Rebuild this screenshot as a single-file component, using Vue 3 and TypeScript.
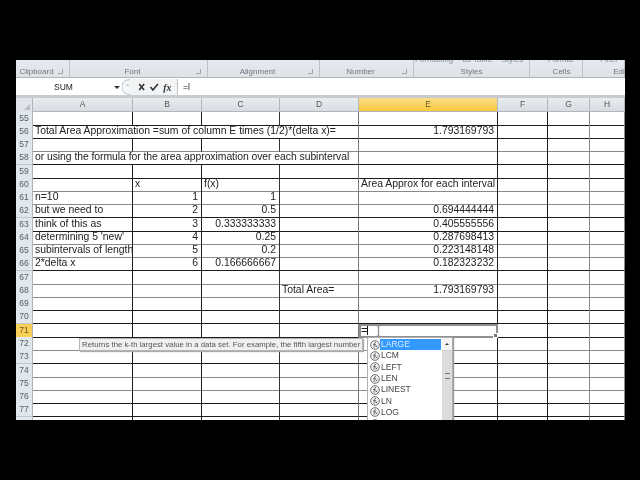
<template>
  <div class="page">
    <div class="sheet">
      <div class="ribbon">
        <div v-for="g in groups" :key="g.label" class="group" :class="g.kind" :style="{ width: g.w + 'px' }">
          <span v-if="g.top" class="group-top">{{ g.top }}</span>
          <span class="group-label">{{ g.label }}</span>
          <span v-if="g.kind === 'launch'" class="launcher"></span>
        </div>
      </div>

      <div class="formula-bar">
        <div class="name-box">
          <span class="name">SUM</span>
          <span class="name-arrow"></span>
        </div>
        <div class="fx-box">
          <svg width="56" height="16" viewBox="0 0 56 16">
            <path d="M8 .5C2 .5 0 4 0 8s2 7.500 8 7.500" fill="#f6f7f8" stroke="#b5bcc4" />
            <path d="M4 6h3" stroke="#c0c4c8" stroke-width="1.500" />
            <path d="M17.500 5l5 6M22.500 5l-5 6" stroke="#333" stroke-width="1.600" />
            <path d="M29 8l2.500 3 5-6" fill="none" stroke="#333" stroke-width="1.600" />
            <text x="42" y="12" class="fx">fx</text>
          </svg>
        </div>
        <div class="formula">=l</div>
      </div>

      <div class="row head">
        <div class="corner"><span class="corner-mark"></span></div>
        <div v-for="c in columns" :key="c" class="col-head" :class="{ active: c === 'E' }">{{ c }}</div>
      </div>

      <div v-for="r in rows" :key="r.n" class="row" :class="{ soft: softRows.includes(r.n) }">
        <div class="row-head" :class="{ active: r.n === 71 }">{{ r.n }}</div>
        <div
          v-for="c in r.cells"
          :key="c.col"
          class="cell"
          :class="[c.col.toLowerCase(), { num: c.num, editing: r.n === 71 && c.col === 'E', tight: r.n === 58 }]"
          :style="{ gridColumn: 'span ' + c.span }"
        >
          {{ c.text }}<span v-if="r.n === 71 && c.col === 'E'" class="caret"></span>
          <span v-if="r.n === 71 && c.col === 'E'" class="handle"></span>
        </div>
      </div>

      <svg class="ibeam" width="7" height="12" viewBox="0 0 7 12">
        <path d="M1 .5h5M1 11.500h5M3.500 .5v11" stroke="#8a8f94" stroke-width="1.300" fill="none" />
      </svg>

      <div class="tip">Returns the k-th largest value in a data set. For example, the fifth largest number</div>

      <div class="picker">
        <div class="picker-list">
          <div v-for="(f, i) in functions" :key="f" class="pick" :class="{ on: i === 0 }">
            <svg class="pick-icon" width="10" height="10" viewBox="0 0 11 11">
              <circle cx="5.500" cy="5.500" r="4.800" fill="#f1f1f1" stroke="#666" />
              <path d="M6.500 2.500C5 2.500 5 3.500 4.800 5L4.300 8.500M3.500 4.800h3M6 6l2 2M8 6L6 8" fill="none" stroke="#444" stroke-width=".8" />
            </svg>
            <span class="pick-name">{{ f }}</span>
          </div>
        </div>
        <div class="scroll">
          <span class="scroll-btn"><span class="up"></span></span>
          <span class="scroll-thumb"><span class="grip"></span></span>
        </div>
      </div>
    </div>
  </div>
</template>

<script setup lang="ts">
interface Cell {
  col: string
  span: number
  text: string
  num: boolean
}

const columns = ['A', 'B', 'C', 'D', 'E', 'F', 'G', 'H']

const groups = [
  { label: 'Clipboard', w: 54, kind: 'launch', top: '' },
  { label: 'Font', w: 138, kind: 'launch', top: '' },
  { label: 'Alignment', w: 112, kind: 'launch', top: '' },
  { label: 'Number', w: 94, kind: 'launch', top: '' },
  { label: 'Styles', w: 116, kind: '', top: 'Formatting ·  as Table ·  Styles ·' },
  { label: 'Cells', w: 53, kind: 'shift', top: '    Format' },
  { label: 'Editing', w: 42, kind: 'tail', top: '     Filter' },
]

const functions = ['LARGE', 'LCM', 'LEFT', 'LEN', 'LINEST', 'LN', 'LOG', 'LOG10']

const softRows = [57, 60, 61, 64, 65, 67, 68, 72, 74, 75]

const data: Record<number, Partial<Record<string, string>>> = {
  56: { A: 'Total Area Approximation =sum of column E times (1/2)*(delta x)=', E: '1.793169793' },
  58: { A: 'or using the formula for the area approximation over each subinterval' },
  60: { B: 'x', C: 'f(x)', E: 'Area Approx for each interval' },
  61: { A: 'n=10', B: '1', C: '1' },
  62: { A: 'but we need to', B: '2', C: '0.5', E: '0.694444444' },
  63: { A: 'think of this as', B: '3', C: '0.333333333', E: '0.405555556' },
  64: { A: "determining 5 'new'", B: '4', C: '0.25', E: '0.287698413' },
  65: { A: 'subintervals of length', B: '5', C: '0.2', E: '0.223148148' },
  66: { A: '2*delta x', B: '6', C: '0.166666667', E: '0.182323232' },
  68: { D: 'Total Area=', E: '1.793169793' },
  71: { E: '=' },
}

function buildRow(n: number) {
  const d = data[n] ?? {}
  const cells: Cell[] = []
  let skip = 0
  for (const col of columns) {
    if (skip > 0) {
      skip--
      continue
    }
    const text = d[col] ?? ''
    const wide = col === 'A' && (n === 56 || n === 58)
    if (wide) skip = 3
    cells.push({ col: wide ? 'D' : col, span: wide ? 4 : 1, text, num: text !== '' && !Number.isNaN(Number(text)) })
  }
  return { n, cells }
}

const rows = Array.from({ length: 24 }, (_, i) => buildRow(55 + i))
</script>

<style scoped>
.page {
  width: 640px;
  height: 480px;
  background: #000;
  padding: 60px 15px 60px 16px;
  box-sizing: border-box;
  font-family: "Liberation Sans", Arial, sans-serif;
}
.sheet {
  position: relative;
  width: 609px;
  height: 360px;
  background: #fff;
  overflow: hidden;
  color: #222;
  filter: blur(0.35px);
}
.ribbon {
  display: flex;
  height: 18px;
  box-sizing: border-box;
  background: linear-gradient(#e6eaee, #dde2e7);
  border-bottom: 1px solid #aeb4ba;
}
.group {
  position: relative;
  box-sizing: border-box;
  flex: none;
  border-right: 1px solid #bcc2c8;
  text-align: center;
}
.group-top {
  position: absolute;
  top: -5px;
  left: 0;
  right: 0;
  font-size: 8px;
  color: #8b9096;
  white-space: pre;
}
.group-label {
  position: absolute;
  left: 0;
  right: 0;
  top: 7px;
  font-size: 8px;
  line-height: 10px;
  color: #70767c;
}
.launch .group-label {
  right: 12px;
}
.shift .group-label {
  left: 11px;
}
.tail .group-label {
  left: 22px;
  right: -22px;
}
.launcher {
  position: absolute;
  right: 6px;
  top: 9px;
  width: 4px;
  height: 4px;
  border-right: 1px solid #a0a6ac;
  border-bottom: 1px solid #a0a6ac;
}
.formula-bar {
  display: flex;
  align-items: center;
  height: 16px;
  padding-top: 1px;
  background: #fff;
  border-bottom: 3px solid #c8ccd0;
}
.name-box {
  position: relative;
  width: 106px;
  flex: none;
  font-size: 8.500px;
  height: 16px;
  line-height: 16px;
}
.name {
  position: absolute;
  left: 38px;
}
.name-arrow {
  position: absolute;
  left: 98px;
  top: 7px;
  border: 3px solid transparent;
  border-top-color: #333;
}
.fx-box {
  width: 56px;
  height: 16px;
  flex: none;
  background: linear-gradient(90deg, #fff 0 6px, #f1f3f5 6px);
  display: flex;
  align-items: center;
  border-right: 1px solid #c0c4c8;
  box-sizing: border-box;
}
.fx {
  font-family: "Liberation Serif", serif;
  font-style: italic;
  font-weight: 700;
  font-size: 10px;
  fill: #333;
}
.formula {
  padding-left: 5px;
  font-size: 8.500px;
}
.row {
  display: grid;
  grid-template-columns: 17px 100px 69px 78px 79px 139px 50px 42px 35px;
  height: 13.270px;
}
.head {
  height: 13.500px;
  background: #dfe4e8;
}
.corner {
  position: relative;
  background: #e0e4e8;
  border-right: 1px solid #b0b6bc;
}
.corner-mark {
  position: absolute;
  right: 2px;
  bottom: 2px;
  border: 3px solid transparent;
  border-right-color: #b6bcc2;
  border-bottom-color: #b6bcc2;
}
.col-head {
  font-size: 8.500px;
  line-height: 13px;
  text-align: center;
  color: #555;
  background: linear-gradient(#e8ecef, #d8dde2);
  border-right: 1px solid #b0b6bc;
  border-bottom: 1px solid #b0b6bc;
  box-sizing: border-box;
}
.col-head.active {
  background: linear-gradient(#fbe08a, #f8c83c);
  color: #6b5a24;
}
.row-head {
  font-size: 8.500px;
  line-height: 13px;
  text-align: center;
  color: #55606a;
  background: #e2e7eb;
  border-bottom: 1px solid #c0c6cc;
  border-right: 1px solid #aeb4ba;
  box-sizing: border-box;
}
.row-head.active {
  background: #f8cf57;
  color: #6b5a24;
}
.cell {
  box-sizing: border-box;
  min-width: 0;
  padding: 0 1px 0 2px;
  font-size: 10.400px;
  line-height: 12px;
  white-space: nowrap;
  border-right: 1px solid #1c1c1c;
  border-bottom: 1px solid #1c1c1c;
}
.tight {
  letter-spacing: -0.05px;
}
.c { border-right-color: #333; }
.d { border-right-color: #777; }
.g, .h { border-right-color: #888; }
.soft .cell {
  border-bottom-color: #8a8a8a;
}
.num {
  text-align: right;
  padding-right: 3px;
}
.editing {
  position: relative;
  outline: 2px solid #8f8f8f;
  outline-offset: -2px;
  z-index: 1;
  background: #fff;
  font-size: 11px;
  text-align: left;
}
.caret {
  display: inline-block;
  width: 1px;
  height: 10px;
  background: #111;
  vertical-align: -1px;
}
.handle {
  position: absolute;
  right: -1px;
  bottom: -1px;
  width: 3px;
  height: 3px;
  background: #777;
  border: 1px solid #fff;
}
.ibeam {
  position: absolute;
  left: 359px;
  top: 265px;
  z-index: 3;
}
.tip {
  position: absolute;
  left: 63px;
  top: 278px;
  z-index: 2;
  height: 11px;
  padding: 0 2px;
  font-size: 7.800px;
  line-height: 11px;
  white-space: nowrap;
  color: #555;
  background: #f0f0f0;
  border: 1px solid #b5b5b5;
  box-shadow: 1px 1px 1px #aaa;
}
.picker {
  position: absolute;
  left: 351px;
  top: 277px;
  z-index: 2;
  display: flex;
  width: 86px;
  height: 100px;
  background: #fff;
  border: 1px solid #b0b0b0;
  box-sizing: border-box;
  box-shadow: 1px 1px 1px #999;
}
.picker-list {
  flex: 1;
  padding-top: 1px;
}
.pick {
  display: flex;
  align-items: center;
  height: 11.300px;
  padding-left: 2px;
}
.pick-icon {
  flex: none;
}
.pick-name {
  flex: 1;
  padding-left: 1px;
  font-family: "Liberation Sans Narrow", "Liberation Sans", sans-serif;
  font-size: 8.500px;
  line-height: 11px;
  color: #444;
}
.on .pick-name {
  background: #3399ff;
  color: #d8ebff;
}
.scroll {
  position: relative;
  width: 10px;
  flex: none;
  margin-left: 1px;
  background: #e8e8e8;
  display: flex;
  flex-direction: column;
}
.scroll-btn {
  height: 12px;
  background: #f4f4f4;
  border-bottom: 1px solid #cfcfcf;
  display: flex;
  align-items: center;
  justify-content: center;
}
.up {
  border: 2.500px solid transparent;
  border-bottom-color: #333;
  margin-top: -3px;
}
.scroll-thumb {
  flex: 1;
  background: #dcdcdc;
  display: flex;
  justify-content: center;
  padding-top: 22px;
}
.grip {
  width: 5px;
  height: 4px;
  border-top: 1px solid #777;
  border-bottom: 1px solid #777;
}
</style>
